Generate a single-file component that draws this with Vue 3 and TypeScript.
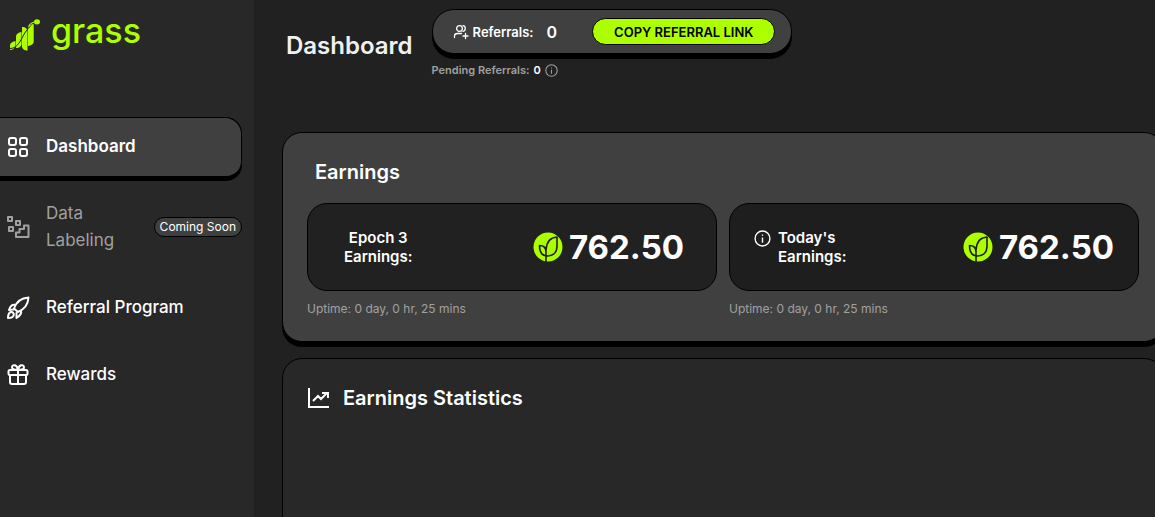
<script setup lang="ts">
interface NavItem {
  label: string
  icon: 'grid' | 'label' | 'rocket' | 'gift'
  active?: boolean
  badge?: string
}

interface Earning {
  lines: [string, string]
  amount: string
  uptime: string
  info: boolean
}

const navItems: NavItem[] = [
  { label: 'Dashboard', icon: 'grid', active: true },
  { label: 'Data Labeling', icon: 'label', badge: 'Coming Soon' },
  { label: 'Referral Program', icon: 'rocket' },
  { label: 'Rewards', icon: 'gift' },
]

const earnings: Earning[] = [
  { lines: ['Epoch 3', 'Earnings:'], amount: '762.50', uptime: '0 day, 0 hr, 25 mins', info: false },
  { lines: ["Today's", 'Earnings:'], amount: '762.50', uptime: '0 day, 0 hr, 25 mins', info: true },
]

const referrals = 0
const pendingReferrals = 0
</script>

<template>
  <div class="page">
    <aside class="sidebar">
      <a class="logo" href="#" aria-label="grass home">
        <svg width="32" height="34" viewBox="0 0 32 34" aria-hidden="true">
          <g fill="#adff00">
            <path d="M1 33v-4.500C1 26 4 24.500 6.500 24v5C5.500 31.500 3.500 33 1 33z" />
            <path d="M7 31V19.500c0-2.500 2.500-4 5.500-4.500v12c0 2.500-2.500 4-5.500 4z" />
            <path d="M13 10c3 0 5.500 1.500 5.500 4v19.500c-3 0-5.500-1.500-5.500-4z" />
            <path d="M19 29V11.500C19 9 21.500 7.500 24.700 7v17.500c0 2.500-2.500 4-5.700 4.500z" />
            <ellipse cx="28" cy="4.800" rx="3" ry="2.600" />
          </g>
          <path d="M1 31.500c6 0 9-5 12-10.500 3-6 5-8.500 9-12.500" fill="none" stroke="#282828" stroke-width="1" />
          <path d="M19.500 9.500C21 6.500 23.500 5 27 5" fill="none" stroke="#adff00" stroke-width="1.200" />
        </svg>
        <span>grass</span>
      </a>
      <nav class="nav">
        <a v-for="item in navItems" :key="item.label" href="#" class="nav-item"
          :class="{ active: item.active, muted: item.badge }">
          <svg class="nav-icon" viewBox="0 0 24 24" fill="none" stroke="currentColor" stroke-width="2"
            stroke-linecap="round" stroke-linejoin="round" aria-hidden="true">
            <template v-if="item.icon === 'grid'">
              <rect x="3" y="3" width="7" height="7" rx="2" />
              <rect x="14" y="3" width="7" height="7" rx="2" />
              <rect x="3" y="14" width="7" height="7" rx="2" />
              <rect x="14" y="14" width="7" height="7" rx="2" />
            </template>
            <template v-else-if="item.icon === 'label'">
              <rect x="2" y="2" width="4" height="4" />
              <rect x="10" y="6" width="4" height="4" />
              <rect x="3" y="12" width="4" height="4" />
              <path d="M10 22v-4.500h3.500V14H18v-3.500h4.500V22z" />
            </template>
            <template v-else-if="item.icon === 'rocket'">
              <path d="M8 12.500C10 6.500 15 2 22.500 1.500c-.5 7.500-4.500 12-10.500 14.500z" />
              <path d="M9.500 9c-3-.8-5 .5-6.500 5l4.500-.5M15 14.500c.8 3-.5 5-4.500 7.500v-5" />
              <path d="M2 22c0-3 .5-5 2.700-6 1.800-.5 3.600 1.300 3 3.200C7 21.300 4.700 22 2 22z" />
            </template>
            <template v-else>
              <rect x="2.500" y="7" width="19" height="5" rx="1.500" />
              <path d="M4 12.500V19a2 2 0 0 0 2 2h12a2 2 0 0 0 2-2v-6.500M12 7v14" />
              <path d="M12 7C8 7 5.500 6 6 4 7 1 11 1.500 12 7c1-5.500 5-6 6-3C18.500 6 16 7 12 7" />
            </template>
          </svg>
          <span class="nav-label">{{ item.label }}</span>
          <span v-if="item.badge" class="badge">{{ item.badge }}</span>
        </a>
      </nav>
    </aside>

    <main class="main">
      <header class="header">
        <h1>Dashboard</h1>
        <div class="referral">
          <div class="referral-bar">
            <svg class="users" viewBox="0 0 16 16" fill="none" stroke="currentColor" stroke-width="1.300"
              stroke-linecap="round" stroke-linejoin="round" aria-hidden="true">
              <circle cx="6.500" cy="4.500" r="2.900" />
              <path d="M1.500 13.500v-1.500c0-2 1.500-2.500 3-2.500h4M10 1.700c3 .3 3 5 0 5.600M12.500 9.500v5M10 12h5" />
            </svg>
            <span class="referral-label">Referrals:</span>
            <span class="referral-count">{{ referrals }}</span>
            <button type="button" class="copy">COPY REFERRAL LINK</button>
          </div>
          <p class="pending">
            Pending Referrals: <b>{{ pendingReferrals }}</b>
            <svg class="info-small" viewBox="0 0 16 16" fill="none" stroke="currentColor" stroke-width="1.300"
              aria-hidden="true">
              <circle cx="8" cy="8" r="7" />
              <path d="M8 7v5M8 4.200v1.300" />
            </svg>
          </p>
        </div>
      </header>

      <section class="card earnings">
        <h2>Earnings</h2>
        <div class="earning-grid">
          <div v-for="entry in earnings" :key="entry.lines[0]">
            <div class="tile" :class="{ dark: entry.info }">
              <svg v-if="entry.info" class="info" viewBox="0 0 16 16" fill="none" stroke="currentColor"
                stroke-width="1.300" aria-hidden="true">
                <circle cx="8" cy="8" r="7" />
                <path d="M8 7v5M8 4.200v1.300" />
              </svg>
              <h3 :class="{ centered: !entry.info }">{{ entry.lines[0] }}<br />{{ entry.lines[1] }}</h3>
              <div class="amount">
                <svg width="30" height="30" viewBox="0 0 30 30" fill="none" stroke="#1e1e1e" stroke-width="1.600"
                  stroke-linejoin="round" aria-hidden="true">
                  <circle cx="15" cy="15" r="14.500" fill="#adff00" stroke="none" />
                  <path d="M13 30V18C13.500 10 17 5.500 24 5v9c0 6.500-4 10-9.500 10C9 24 6.500 21 6.500 13.500 10 13.500 13 15 13 20" />
                </svg>
                <span>{{ entry.amount }}</span>
              </div>
            </div>
            <p class="uptime">Uptime: {{ entry.uptime }}</p>
          </div>
        </div>
      </section>

      <section class="card stats">
        <h2>
          <svg width="24" height="24" viewBox="0 0 24 24" fill="none" stroke="currentColor" stroke-width="2"
            aria-hidden="true">
            <path d="M2 2v19h20" />
            <path d="M6 15l5-5 3 3 6-6M15 7h6v5" />
          </svg>
          Earnings Statistics
        </h2>
      </section>
    </main>
  </div>
</template>

<style>
body {
  background: #212121;
}
</style>

<style scoped>
* {
  box-sizing: border-box;
}

.page {
  display: flex;
  height: 100vh;
  overflow: hidden;
  background: #212121;
  color: #fff;
  font-family: Inter, "Liberation Sans", sans-serif;
}

h1,
h2,
h3,
p {
  margin: 0;
}

.sidebar {
  flex: 0 0 254px;
  background: #282828;
  padding-right: 12px;
}

.logo {
  display: flex;
  align-items: center;
  gap: 10px;
  height: 64px;
  padding: 4px 0 0 9px;
  margin-bottom: 53px;
  color: #adff00;
  font-size: 34px;
  font-weight: 500;
  line-height: 40px;
  text-decoration: none;
}

.logo span {
  margin-bottom: 6px;
}

.nav {
  display: flex;
  flex-direction: column;
  gap: 8px;
}

.nav-item {
  display: flex;
  align-items: center;
  padding: 16px 0 16px 6px;
  color: #fff;
  font-size: 17px;
  font-weight: 500;
  line-height: 27px;
  text-decoration: none;
}

.nav-item.active {
  background: #404040;
  border-radius: 0 16px 16px 0;
  box-shadow: inset -1px 1px #000, 0 5px #000;
  font-weight: 600;
}

.nav-item.muted {
  color: #a0a0a0;
  font-weight: 400;
}

.nav-icon {
  flex: none;
  width: 24px;
  height: 24px;
  margin-right: 16px;
}

.nav-label {
  flex: 1;
}

.badge {
  flex: none;
  padding: 0 5px;
  border: 1px solid #000;
  border-radius: 10px;
  background: #404040;
  color: #fff;
  font-size: 12px;
  line-height: 18px;
}

.main {
  flex: 1;
  min-width: 0;
  padding-left: 28px;
}

.header {
  display: flex;
  align-items: flex-start;
  gap: 19px;
  height: 132px;
  padding: 9px 0 0 4px;
}

h1 {
  padding-top: 20px;
  color: #f0f0f0;
  font-size: 24px;
  font-weight: 600;
  line-height: 34px;
}

.referral-bar {
  display: flex;
  align-items: center;
  height: 45px;
  padding: 0 16px 0 20px;
  border: 1px solid #000;
  border-radius: 22px;
  background: #404040;
  box-shadow: 0 5px #000;
}

.users {
  width: 16px;
  height: 16px;
  margin-right: 4px;
}

.referral-label {
  font-size: 13px;
  font-weight: 600;
}

.referral-count {
  margin: 0 35px 0 13px;
  font-size: 16px;
  font-weight: 600;
}

.copy {
  height: 27px;
  padding: 0 21px;
  border: 1px solid #000;
  border-radius: 14px;
  background: #adff00;
  color: #000;
  font-family: inherit;
  font-size: 13px;
  font-weight: 600;
}

.pending {
  display: flex;
  align-items: center;
  gap: 4px;
  margin-top: 8px;
  color: #a0a0a0;
  font-size: 11px;
  font-weight: 600;
  line-height: 16px;
}

.pending b {
  color: #fff;
  font-weight: 600;
}

.info-small {
  width: 13px;
  height: 13px;
}

.card {
  margin-right: -9px;
  border: 1px solid #000;
  border-radius: 20px;
}

.earnings {
  padding: 24px 24px 22px;
  background: #404040;
  box-shadow: 0 5px #000;
}

h2 {
  font-size: 20px;
  font-weight: 600;
  line-height: 30px;
}

.earnings h2 {
  padding-left: 8px;
  margin-bottom: 16px;
}

.earning-grid {
  display: grid;
  grid-template-columns: 1fr 1fr;
  gap: 12px;
}

.tile {
  display: flex;
  align-items: center;
  height: 88px;
  padding: 0 24px;
  border: 1px solid #000;
  border-radius: 20px;
  background: #212121;
}

.tile.dark {
  background: #1e1e1e;
}

.info {
  width: 17px;
  height: 17px;
  margin: 0 7px 17px 0;
}

h3 {
  font-size: 15px;
  font-weight: 600;
  line-height: 19px;
}

h3.centered {
  padding-left: 12px;
  text-align: center;
}

.amount {
  display: flex;
  align-items: center;
  gap: 6px;
  margin-left: auto;
  font-size: 33px;
  font-weight: 700;
}

h3.centered + .amount {
  padding-right: 8px;
}

.uptime {
  margin-top: 7px;
  color: #a0a0a0;
  font-size: 12px;
  line-height: 21px;
}

.stats {
  min-height: 400px;
  margin-top: 16px;
  padding: 24px;
  background: #282828;
}

.stats h2 {
  display: flex;
  align-items: center;
  gap: 12px;
}
</style>
